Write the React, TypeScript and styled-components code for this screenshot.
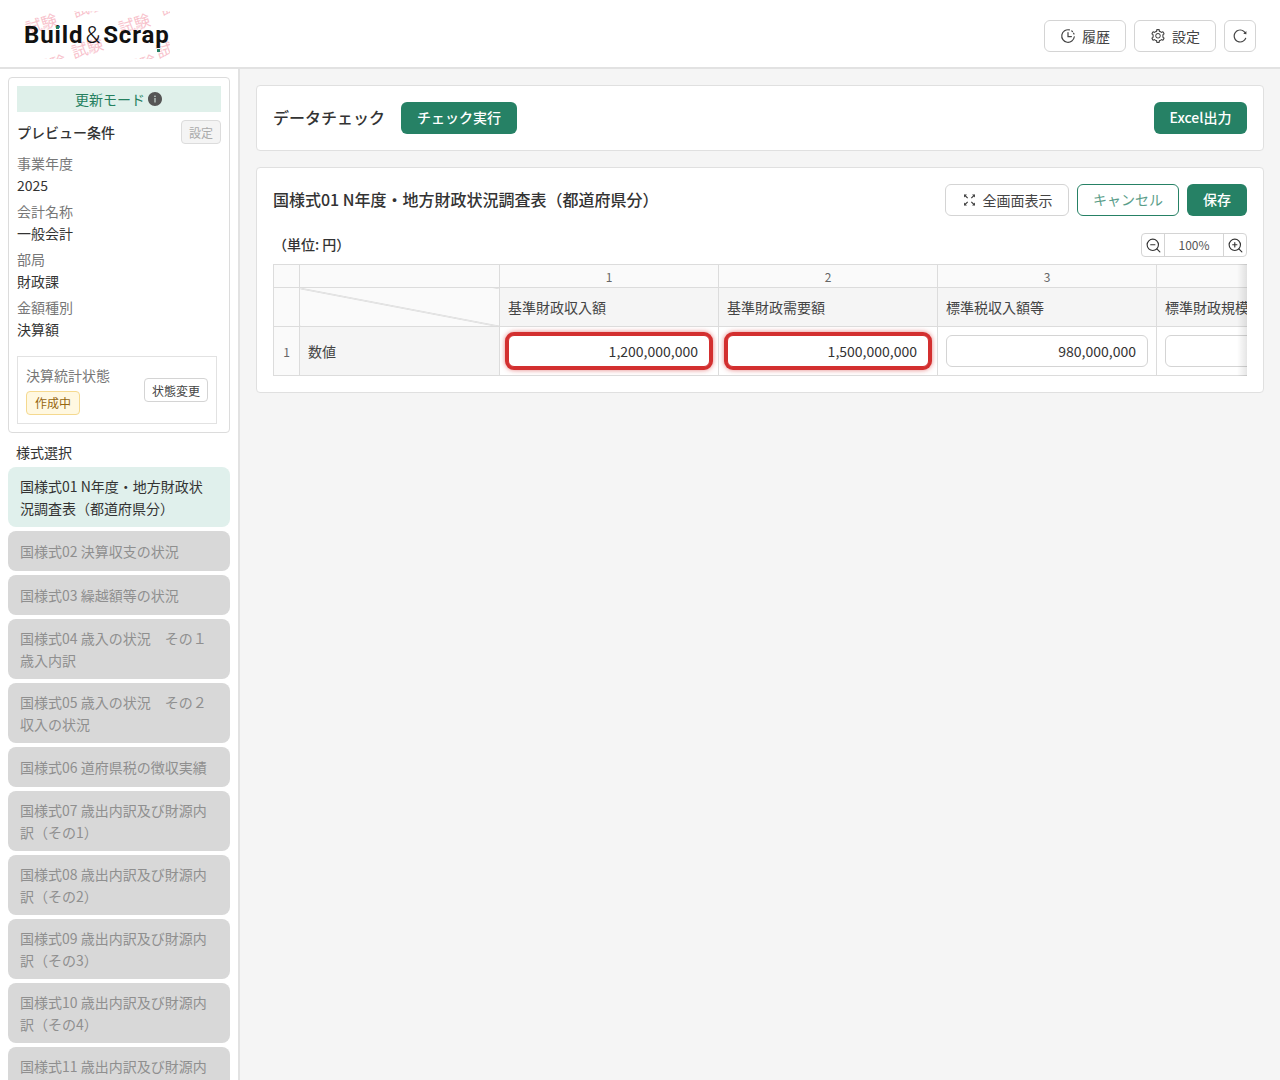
import React from "react";
import styled, { createGlobalStyle } from "styled-components";
import { ZoomIn, ZoomOut } from "lucide-react";
import { AiFillInfoCircle, AiOutlineReload, AiOutlineSetting } from "react-icons/ai";

const GlobalStyle = createGlobalStyle`
  html, body {
    margin: 0;
    height: 100%;
    overflow: hidden;
    background: #fff;
  }
  * { box-sizing: border-box; }
  body, button, input {
    font-family: "Noto Sans CJK JP", "Noto Sans", sans-serif;
    color: #333;
  }
`;

const Page = styled.div`
  width: 1280px;
  height: 1080px;
  display: flex;
  flex-direction: column;
  overflow: hidden;
`;

const Header = styled.header`
  height: 69px;
  flex: none;
  display: flex;
  align-items: center;
  justify-content: space-between;
  padding: 3px 24px 0 24px;
  background: #fff;
  border-bottom: 2px solid #e2e2e2;
`;

const Logo = styled.div`
  position: relative;
  width: 146px;
  height: 48px;
  display: flex;
  align-items: center;
  overflow: hidden;
`;

const Stamp = styled.span<{ $x: number; $y: number }>`
  position: absolute;
  left: ${(p) => p.$x}px;
  top: ${(p) => p.$y}px;
  font-size: 16px;
  line-height: 16px;
  color: #f8c2cc;
  transform: rotate(-18deg);
  white-space: nowrap;
`;

const LogoText = styled.div`
  position: relative;
  font-family: "Roboto", sans-serif;
  font-size: 24px;
  font-weight: 700;
  letter-spacing: 0.9px;
  color: #111;
  white-space: nowrap;
`;

const Amp = styled.span`
  font-weight: 300;
  margin: 0 2px;
`;

const LogoDot = styled.span<{ $x: number; $y: number }>`
  position: absolute;
  left: ${(p) => p.$x}px;
  top: ${(p) => p.$y}px;
  width: 3px;
  height: 3px;
  background: #268165;
`;

const HeaderActions = styled.div`
  display: flex;
  gap: 8px;
  margin-top: 1px;
`;

const HeaderButton = styled.button<{ $width: number }>`
  width: ${(p) => p.$width}px;
  height: 32px;
  display: flex;
  align-items: center;
  justify-content: center;
  gap: 6px;
  padding: 0;
  font-size: 14px;
  color: #444;
  background: #fff;
  border: 1px solid #d4d4d4;
  border-radius: 6px;
`;

const Body = styled.div`
  flex: 1;
  min-height: 0;
  display: flex;
`;

const Sidebar = styled.aside`
  width: 240px;
  flex: none;
  padding: 8px 8px 0;
  background: #fff;
  border-right: 2px solid #e2e2e2;
  overflow: hidden;
`;

const ConditionCard = styled.section`
  height: 356px;
  padding: 8px;
  border: 1px solid #dcdcdc;
  border-radius: 4px;
`;

const ModeBanner = styled.div`
  height: 26px;
  display: flex;
  align-items: center;
  justify-content: center;
  gap: 2px;
  font-size: 14px;
  color: #25805f;
  background: #dff0ea;
`;

const ConditionHead = styled.div`
  display: flex;
  align-items: center;
  justify-content: space-between;
  height: 24px;
  margin: 8px 0 8px;
  font-size: 14px;
  font-weight: 500;
  color: #333;
`;

const ConditionTitle = styled.span`
  margin-top: -1px;
`;

const DisabledButton = styled.button`
  width: 40px;
  height: 24px;
  padding: 0;
  font-size: 12px;
  color: #aaa;
  background: #f4f4f4;
  border: 1px solid #dcdcdc;
  border-radius: 4px;
`;

const FieldLabel = styled.div`
  height: 22px;
  line-height: 22px;
  font-size: 14px;
  color: #777;
`;

const FieldValue = styled.div`
  height: 22px;
  margin-bottom: 4px;
  line-height: 22px;
  font-size: 14px;
  color: #333;
`;

const StatusBox = styled.div`
  height: 68px;
  margin: 16px 4px 0 0;
  padding: 9px 8px 0;
  display: flex;
  justify-content: space-between;
  border: 1px solid #e2e2e2;
`;

const StatusLabel = styled.div`
  height: 22px;
  line-height: 18px;
  font-size: 14px;
  color: #777;
`;

const StatusTag = styled.div`
  width: 54px;
  height: 24px;
  margin-top: 3px;
  line-height: 21px;
  text-align: center;
  font-size: 12px;
  color: #96660e;
  background: #fff8e1;
  border: 1px solid #f5d98f;
  border-radius: 4px;
`;

const ChangeButton = styled.button`
  width: 64px;
  height: 24px;
  margin-top: 12px;
  padding: 0;
  font-size: 12px;
  color: #444;
  background: #fff;
  border: 1px solid #d4d4d4;
  border-radius: 4px;
`;

const SectionLabel = styled.div`
  height: 22px;
  margin: 8px 0 4px 8px;
  line-height: 22px;
  font-size: 14px;
  color: #333;
`;

const FormList = styled.div`
  display: flex;
  flex-direction: column;
  gap: 4px;
`;

const FormItem = styled.div<{ $active?: boolean }>`
  flex: none;
  min-height: 40px;
  padding: 8px 16px 8px 12px;
  display: flex;
  align-items: center;
  line-height: 22px;
  font-size: 14px;
  border-radius: 8px;
  color: ${(p) => (p.$active ? "#333" : "#8f8f8f")};
  background: ${(p) => (p.$active ? "#e0f0ec" : "#d8d8d8")};
`;

const Main = styled.main`
  flex: 1;
  min-width: 0;
  display: flex;
  flex-direction: column;
  gap: 16px;
  padding: 16px 16px 0;
  background: #f5f5f5;
`;

const Card = styled.section`
  padding: 16px;
  background: #fff;
  border: 1px solid #e0e0e0;
  border-radius: 4px;
`;

const CheckBar = styled.div`
  display: flex;
  align-items: center;
  gap: 16px;
`;

const CheckTitle = styled.div`
  height: 32px;
  font-size: 16px;
  font-weight: 500;
  line-height: 30px;
  color: #333;
`;

const Spacer = styled.div`
  flex: 1;
`;

const PrimaryButton = styled.button<{ $width: number }>`
  width: ${(p) => p.$width}px;
  height: 32px;
  padding: 0 0 2px;
  font-size: 14px;
  font-weight: 500;
  color: #fff;
  background: #268165;
  border: none;
  border-radius: 6px;
`;

const OutlineButton = styled.button`
  width: 102px;
  height: 32px;
  padding: 0 0 2px;
  font-size: 14px;
  color: #5a9d89;
  background: #fff;
  border: 1px solid #268165;
  border-radius: 6px;
`;

const SheetHead = styled.div`
  display: flex;
  align-items: center;
  gap: 8px;
`;

const SheetTitle = styled.div`
  flex: 1;
  height: 32px;
  font-size: 16px;
  font-weight: 500;
  line-height: 30px;
  color: #333;
`;

const UnitRow = styled.div`
  height: 24px;
  margin-top: 17px;
  display: flex;
  align-items: center;
  justify-content: space-between;
  font-size: 14px;
  font-weight: 500;
  color: #333;
`;

const Unit = styled.span`
  margin-top: -2px;
`;

const Zoomer = styled.div`
  width: 106px;
  height: 24px;
  display: flex;
  align-items: center;
  background: #fff;
  border: 1px solid #d4d4d4;
  border-radius: 4px;
`;

const ZoomButton = styled.span`
  width: 22px;
  height: 22px;
  flex: none;
  display: flex;
  align-items: center;
  justify-content: center;
  color: #333;
`;

const ZoomValue = styled.span`
  flex: 1;
  height: 22px;
  line-height: 21px;
  text-align: center;
  font-size: 12px;
  font-weight: 400;
  color: #555;
  border-left: 1px solid #d4d4d4;
  border-right: 1px solid #d4d4d4;
`;

const TableWrap = styled.div`
  position: relative;
  margin-top: 7px;
  overflow: hidden;
`;

const Fade = styled.div`
  position: absolute;
  top: 0;
  right: 0;
  bottom: 0;
  width: 10px;
  background: linear-gradient(to right, rgba(0, 0, 0, 0), rgba(0, 0, 0, 0.1));
`;

const Table = styled.table`
  width: 1100px;
  table-layout: fixed;
  border-collapse: collapse;
  font-size: 14px;
`;

const NumberHead = styled.th`
  height: 23px;
  padding: 0;
  font-size: 12px;
  font-weight: 400;
  color: #666;
  background: #fafafa;
  border: 1px solid #dcdcdc;
`;

const TitleHead = styled.th`
  height: 39px;
  padding: 0 8px;
  text-align: left;
  white-space: nowrap;
  overflow: hidden;
  font-size: 14px;
  font-weight: 400;
  color: #444;
  background: #f5f5f5;
  border: 1px solid #dcdcdc;
`;

const DiagonalHead = styled.th`
  height: 39px;
  padding: 0;
  background: linear-gradient(
    to top right,
    #fafafa calc(50% - 0.8px),
    #c4c4c4 50%,
    #fafafa calc(50% + 0.8px)
  );
  border: 1px solid #dcdcdc;
`;

const RowNumber = styled.td`
  height: 49px;
  padding: 0;
  text-align: center;
  font-size: 12px;
  color: #666;
  background: #fafafa;
  border: 1px solid #dcdcdc;
`;

const RowTitle = styled.td`
  padding: 0 8px;
  font-size: 14px;
  color: #444;
  background: #f5f5f5;
  border: 1px solid #dcdcdc;
`;

const ValueCell = styled.td`
  padding: 0 8px;
  background: #fff;
  border: 1px solid #dcdcdc;
`;

const ValueInput = styled.input<{ $error?: boolean }>`
  display: block;
  width: 100%;
  height: 32px;
  padding: 0 11px;
  text-align: right;
  font-size: 14px;
  color: #333;
  background: #fff;
  outline: none;
  border-radius: 6px;
  border: 1px solid ${(p) => (p.$error ? "#d32f2f" : "#d4d4d4")};
  box-shadow: ${(p) =>
    p.$error ? "0 0 0 3px #d32f2f, 0 0 5px 3px rgba(211, 47, 47, 0.6)" : "none"};
`;

const HistoryIcon = () => (
  <svg width="16" height="16" viewBox="0 0 16 16" fill="none" stroke="#444" strokeWidth="1.2" strokeLinecap="round">
    <path d="M9.4 1.9a6.3 6.3 0 1 0 4.9 6.9" />
    <path d="M8 4.6v4h3.4" />
    <path d="M11.8 3l.7.6M13.6 5.2l.4.8" />
  </svg>
);

const ExpandIcon = () => (
  <svg width="15" height="14" viewBox="0 0 14 14" fill="none" stroke="#444" strokeWidth="1.2">
    <path d="M2 2l3.2 3.2M12 2L8.8 5.2M2 12l3.2-3.2M12 12L8.8 8.8" />
    <path d="M1.5 1.5h3l-3 3zM12.5 1.5h-3l3 3zM1.5 12.5h3l-3-3zM12.5 12.5h-3l3-3z" fill="#444" stroke="none" />
  </svg>
);

const forms = [
  "国様式02 決算収支の状況",
  "国様式03 繰越額等の状況",
  "国様式04 歳入の状況　その１ 歳入内訳",
  "国様式05 歳入の状況　その２ 収入の状況",
  "国様式06 道府県税の徴収実績",
  "国様式07 歳出内訳及び財源内訳（その1）",
  "国様式08 歳出内訳及び財源内訳（その2）",
  "国様式09 歳出内訳及び財源内訳（その3）",
  "国様式10 歳出内訳及び財源内訳（その4）",
  "国様式11 歳出内訳及び財源内訳（その5）",
];

const fields = [
  ["事業年度", "2025"],
  ["会計名称", "一般会計"],
  ["部局", "財政課"],
  ["金額種別", "決算額"],
];

const columns = [
  { no: 1, title: "基準財政収入額", value: "1,200,000,000", error: true },
  { no: 2, title: "基準財政需要額", value: "1,500,000,000", error: true },
  { no: 3, title: "標準税収入額等", value: "980,000,000", error: false },
  { no: 4, title: "標準財政規模", value: "", error: false },
];

export default function App() {
  return (
    <Page>
      <GlobalStyle />
      <Header>
        <Logo>
          <Stamp $x={1} $y={4}>試験</Stamp>
          <Stamp $x={94} $y={4}>試験</Stamp>
          <Stamp $x={47} $y={28}>試験</Stamp>
          <Stamp $x={132} $y={30}>試</Stamp>
          <Stamp $x={48} $y={-13}>試験</Stamp>
          <Stamp $x={136} $y={-13}>試</Stamp>
          <Stamp $x={10} $y={45}>試験</Stamp>
          <Stamp $x={100} $y={45}>試験</Stamp>
          <LogoText>
            Build<Amp>&amp;</Amp>Scrap
          </LogoText>
          <LogoDot $x={32} $y={15} />
          <LogoDot $x={133} $y={38} />
        </Logo>
        <HeaderActions>
          <HeaderButton $width={82}>
            <HistoryIcon />
            履歴
          </HeaderButton>
          <HeaderButton $width={82}>
            <AiOutlineSetting size={16} />
            設定
          </HeaderButton>
          <HeaderButton $width={32}>
            <AiOutlineReload size={16} />
          </HeaderButton>
        </HeaderActions>
      </Header>
      <Body>
        <Sidebar>
          <ConditionCard>
            <ModeBanner>
              更新モード
              <AiFillInfoCircle size={16} color="#555" />
            </ModeBanner>
            <ConditionHead>
              <ConditionTitle>プレビュー条件</ConditionTitle>
              <DisabledButton disabled>設定</DisabledButton>
            </ConditionHead>
            {fields.map(([label, value]) => (
              <div key={label}>
                <FieldLabel>{label}</FieldLabel>
                <FieldValue>{value}</FieldValue>
              </div>
            ))}
            <StatusBox>
              <div>
                <StatusLabel>決算統計状態</StatusLabel>
                <StatusTag>作成中</StatusTag>
              </div>
              <ChangeButton>状態変更</ChangeButton>
            </StatusBox>
          </ConditionCard>
          <SectionLabel>様式選択</SectionLabel>
          <FormList>
            <FormItem $active>国様式01 N年度・地方財政状況調査表（都道府県分）</FormItem>
            {forms.map((name) => (
              <FormItem key={name}>{name}</FormItem>
            ))}
          </FormList>
        </Sidebar>
        <Main>
          <Card>
            <CheckBar>
              <CheckTitle>データチェック</CheckTitle>
              <PrimaryButton $width={116}>チェック実行</PrimaryButton>
              <Spacer />
              <PrimaryButton $width={93}>Excel出力</PrimaryButton>
            </CheckBar>
          </Card>
          <Card>
            <SheetHead>
              <SheetTitle>国様式01 N年度・地方財政状況調査表（都道府県分）</SheetTitle>
              <HeaderButton $width={124}>
                <ExpandIcon />
                全画面表示
              </HeaderButton>
              <OutlineButton>キャンセル</OutlineButton>
              <PrimaryButton $width={60}>保存</PrimaryButton>
            </SheetHead>
            <UnitRow>
              <Unit>（単位: 円）</Unit>
              <Zoomer>
                <ZoomButton>
                  <ZoomOut size={17} strokeWidth={1.6} />
                </ZoomButton>
                <ZoomValue>100%</ZoomValue>
                <ZoomButton>
                  <ZoomIn size={17} strokeWidth={1.6} />
                </ZoomButton>
              </Zoomer>
            </UnitRow>
            <TableWrap>
              <Table>
                <colgroup>
                  <col style={{ width: 26 }} />
                  <col style={{ width: 200 }} />
                  <col style={{ width: 219 }} />
                  <col style={{ width: 219 }} />
                  <col style={{ width: 219 }} />
                  <col style={{ width: 219 }} />
                </colgroup>
                <thead>
                  <tr>
                    <NumberHead />
                    <NumberHead />
                    {columns.map((c) => (
                      <NumberHead key={c.no}>{c.no}</NumberHead>
                    ))}
                  </tr>
                  <tr>
                    <NumberHead />
                    <DiagonalHead />
                    {columns.map((c) => (
                      <TitleHead key={c.no}>{c.title}</TitleHead>
                    ))}
                  </tr>
                </thead>
                <tbody>
                  <tr>
                    <RowNumber>1</RowNumber>
                    <RowTitle>数値</RowTitle>
                    {columns.map((c) => (
                      <ValueCell key={c.no}>
                        <ValueInput $error={c.error} defaultValue={c.value} />
                      </ValueCell>
                    ))}
                  </tr>
                </tbody>
              </Table>
              <Fade />
            </TableWrap>
          </Card>
        </Main>
      </Body>
    </Page>
  );
}
